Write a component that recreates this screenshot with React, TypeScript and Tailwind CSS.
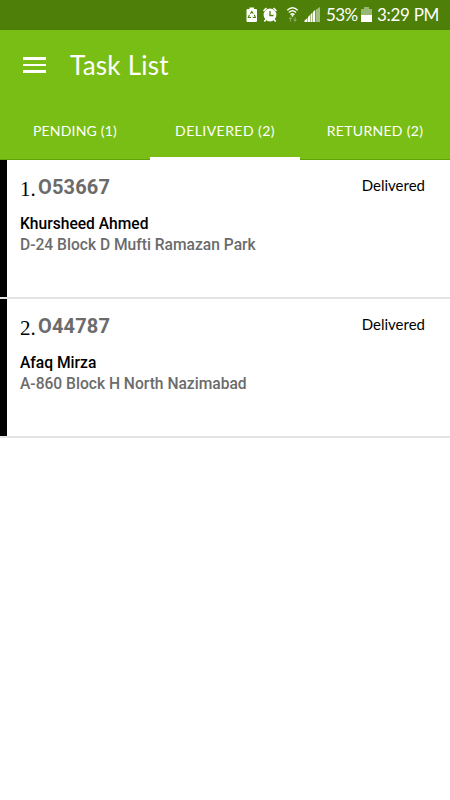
type Task = {
  id: string;
  name: string;
  address: string;
  status: string;
};

const tabs = [
  { label: "PENDING (1)", active: false, spacing: "tracking-[0.2px]" },
  { label: "DELIVERED (2)", active: true, spacing: "tracking-[0.45px]" },
  { label: "RETURNED (2)", active: false, spacing: "tracking-[0.3px]" },
];

const tasks: Task[] = [
  { id: "O53667", name: "Khursheed Ahmed", address: "D-24 Block D Mufti Ramazan Park", status: "Delivered" },
  { id: "O44787", name: "Afaq Mirza", address: "A-860 Block H North Nazimabad", status: "Delivered" },
];

function StatusIcons() {
  return (
    <svg width="76" height="30" viewBox="0 0 76 30" fill="none" className="shrink-0">
      {/* battery saver */}
      <path d="M3.500 7.500h4.500V9h2q1 0 1 1v11q0 1-1 1H1.500q-1 0-1-1V10q0-1 1-1h2z" fill="#fff" />
      <path d="m4.300 13.700 1.500-2.200 1.500 2.200M8.300 14.700l1.100 2.800H6.700M5 17.500H2.300l1.100-2.800" stroke="#4e8009" strokeWidth="1.100" />
      {/* alarm */}
      <circle cx="24" cy="15" r="6.400" fill="#fff" />
      <path d="m17.500 11 3-3M27.500 8l3 3M20 19.500l-1.700 2M28 19.500l1.700 2" stroke="#fff" strokeWidth="1.600" />
      <path d="M24 11v4.500h3.500" stroke="#4e8009" strokeWidth="1.300" />
      {/* wifi with transfer arrows */}
      <path d="M41.300 10.200c3.200-3 7.200-3 10.400 0M43 12.500c2.200-2.100 4.800-2.100 7 0M44.600 14.700c1.200-1.200 2.600-1.200 3.800 0" stroke="#fff" strokeWidth="1.500" />
      <circle cx="46.500" cy="15.800" r="1" fill="#fff" />
      <path d="M44 21.500V18.500h1v3zM42.500 19l2-2.300 2 2.300zM48.500 17h1v3h-1zM47 19.500h4L49 22z" fill="#8baa61" />
      {/* mobile signal */}
      <path d="M58.500 22v-1.500l3-2.500V22zM62 22v-5l2-2v7zM64.500 22v-7.500l2-2V22zM67 22V12l2-2v12z" fill="#fff" />
      <path d="M69.500 22V10l4.500-3v15z" fill="#a2bf7d" />
    </svg>
  );
}

function BatteryIcon() {
  return (
    <svg width="11" height="30" viewBox="0 0 11 30" className="shrink-0">
      <path d="M3 7h5v2h3v6H0V9h3z" fill="#98b772" />
      <path d="M0 15h11v7H0z" fill="#fff" />
    </svg>
  );
}

function TaskRow({ task, index }: { task: Task; index: number }) {
  return (
    <li className="flex h-[139px] border-b-2 border-[#e4e4e4]">
      <div className="w-[7px] shrink-0 bg-black" />
      <div className="flex flex-1 flex-col pl-[13px] pr-[25px] pt-[15px]">
        <div className="flex h-6 items-start justify-between">
          <div className="flex">
            <span className="mt-[2px] w-[18px] font-['Liberation_Serif',serif] text-[21px] leading-6 text-black">
              {index}.
            </span>
            <span className="font-['Roboto',sans-serif] text-[20px] font-bold leading-6 tracking-[0.15px] text-[#6b6b6b]">
              {task.id}
            </span>
          </div>
          <span className="-mt-[2px] font-['Lato',sans-serif] text-[15px] leading-6 text-black">
            {task.status}
          </span>
        </div>
        <p className="mt-[15px] whitespace-nowrap font-['Roboto',sans-serif] text-[15.6px] font-medium leading-[21px] text-black">
          {task.name}
        </p>
        <p className="whitespace-nowrap font-['Roboto',sans-serif] text-[15.6px] font-medium leading-[21px] text-[#6b6b6b]">
          {task.address}
        </p>
      </div>
    </li>
  );
}

export default function App() {
  return (
    <main className="h-screen overflow-hidden bg-white">
      <div className="flex h-[30px] items-center justify-end bg-[#4e8009] pr-[11px] font-['Lato',sans-serif] text-[17px] leading-[30px] text-white">
        <StatusIcons />
        <span className="ml-[4px] w-[32px] whitespace-nowrap tracking-[-0.6px]">53%</span>
        <span className="ml-[3px]"><BatteryIcon /></span>
        <span className="ml-[5px] w-[62px] whitespace-nowrap tracking-[-0.3px]">3:29 PM</span>
      </div>

      <header className="flex h-[130px] flex-col bg-[#78be15] text-white">
        <div className="flex h-[70px] items-center pl-[23px]">
          <button aria-label="Menu" className="flex w-[47px] flex-col gap-1">
            <span className="h-[2.500px] w-[23px] bg-white" />
            <span className="h-[2.500px] w-[23px] bg-white" />
            <span className="h-[2.500px] w-[23px] bg-white" />
          </button>
          <h1 className="font-['Lato',sans-serif] text-[26px] leading-8 tracking-[0.25px]">Task List</h1>
        </div>
        <nav className="grid flex-1 grid-cols-3">
          {tabs.map((tab) => (
            <button
              key={tab.label}
              className={`whitespace-nowrap font-['Lato',sans-serif] text-[14px] leading-none ${tab.spacing} ${
                tab.active ? "border-b-[3px] border-white pt-[5px]" : "border-b border-[#5da50b] pt-[3px]"
              }`}
            >
              {tab.label}
            </button>
          ))}
        </nav>
      </header>

      <ul>
        {tasks.map((task, i) => (
          <TaskRow key={task.id} task={task} index={i + 1} />
        ))}
      </ul>
    </main>
  );
}
